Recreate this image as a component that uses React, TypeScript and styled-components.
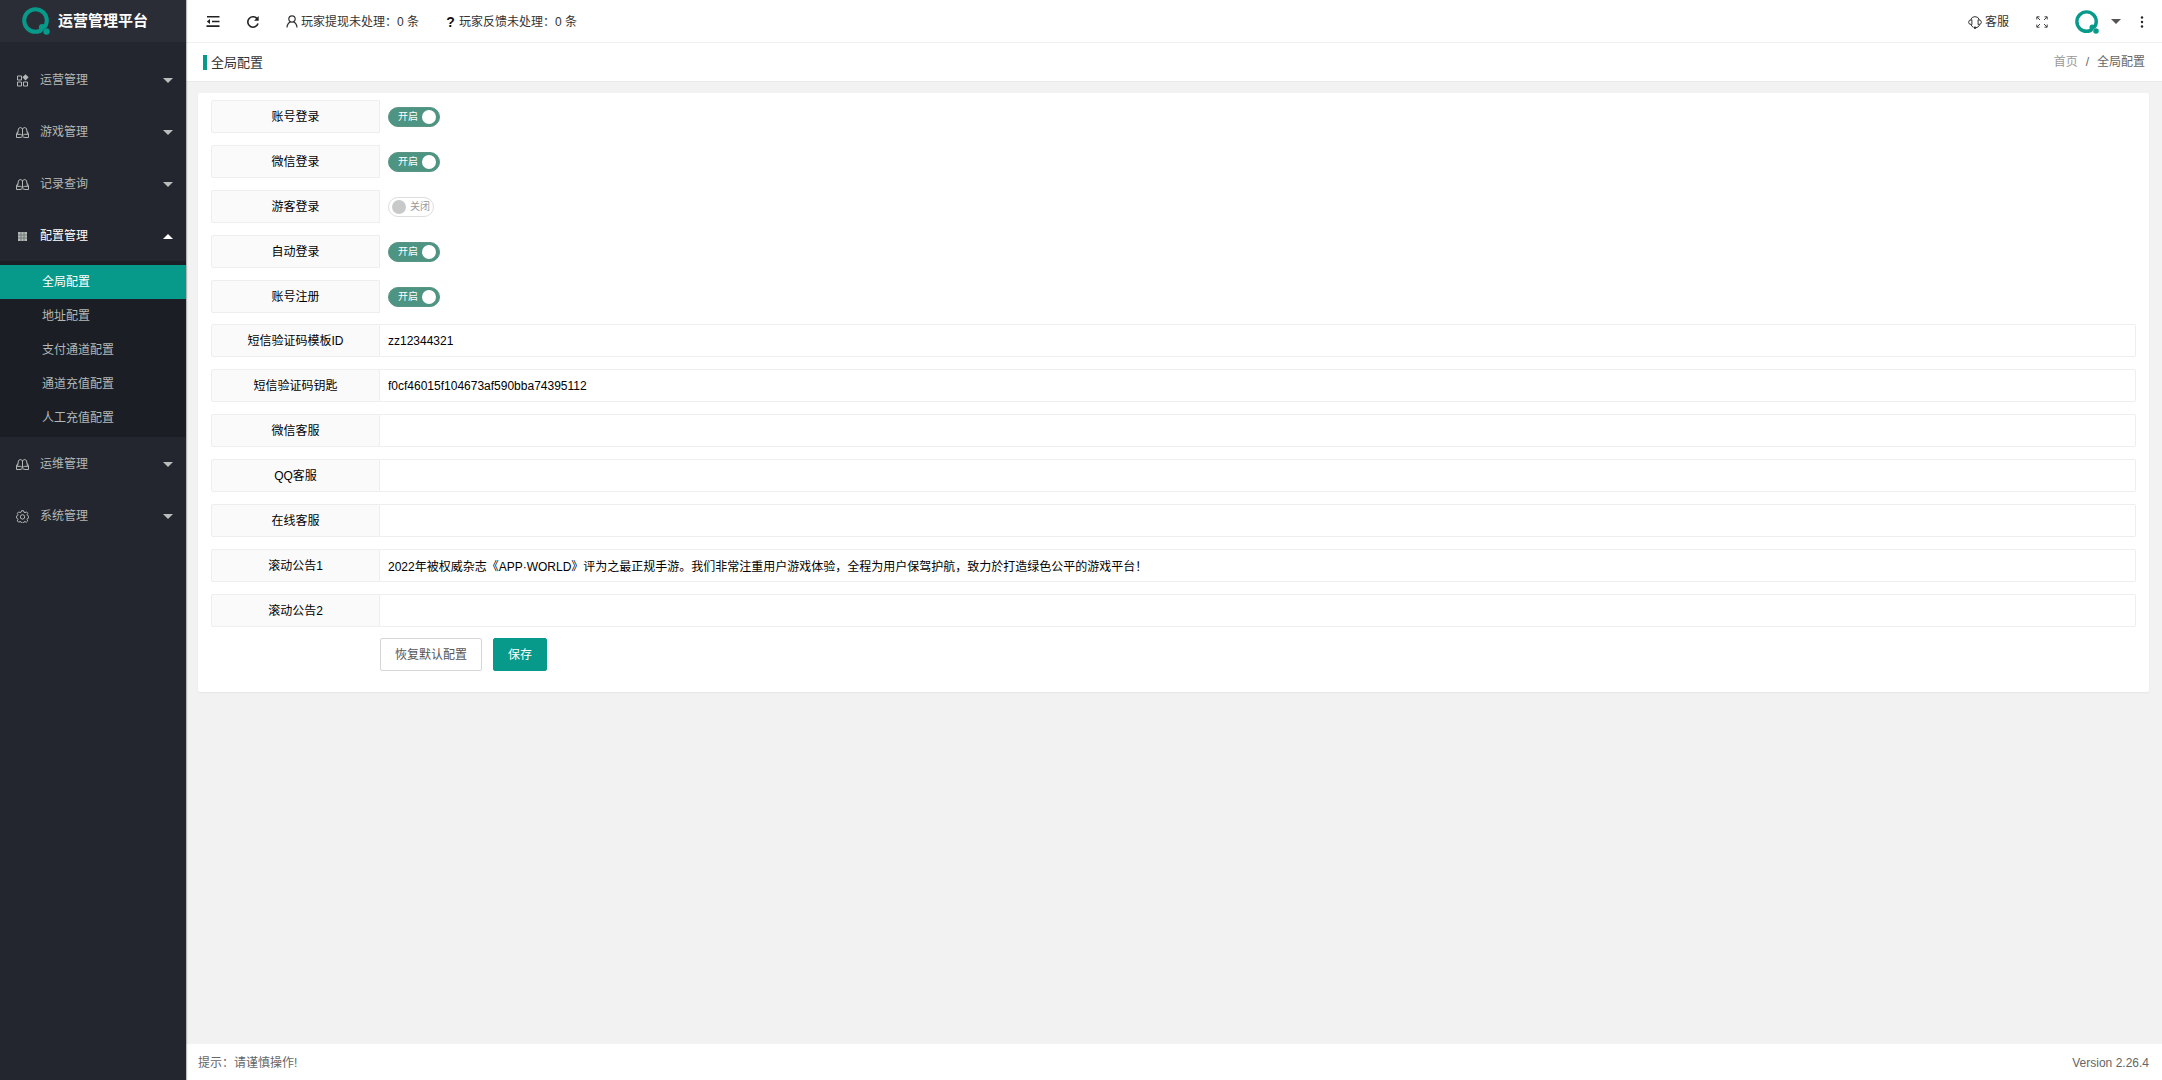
import React, { useState } from "react";
import styled, { createGlobalStyle, css } from "styled-components";

const teal = "#079989";

const GlobalStyle = createGlobalStyle`
  *, *::before, *::after { box-sizing: border-box; }
  body {
    margin: 0;
    color: #333;
    background: #f2f2f2;
    font: 12px/18px "Liberation Sans", "Noto Sans CJK SC", sans-serif;
  }
  a { color: inherit; text-decoration: none; }
  button, input { font: inherit; color: inherit; }
`;

const Layout = styled.div`
  display: grid;
  grid-template-columns: 186px minmax(0, 1fr);
  min-height: 100vh;
`;

/* ---------- sidebar ---------- */

const Sidebar = styled.aside`
  background: #23262e;
  color: #b3b8b6;
  z-index: 1;
  box-shadow: 1px 0 1px rgba(0, 0, 0, 0.25);
`;

const Brand = styled.h1`
  display: flex;
  align-items: center;
  gap: 8px;
  height: 42px;
  margin: 0 0 11px;
  padding-left: 22px;
  background: #2a2d35;
  color: #fff;
  font-size: 15px;
  font-weight: 700;
`;

const MenuButton = styled.button<{ $open?: boolean }>`
  display: flex;
  align-items: center;
  gap: 11px;
  width: 100%;
  height: 52px;
  padding: 2px 13px 0 16px;
  border: 0;
  background: none;
  color: ${(p) => (p.$open ? "#fff" : "inherit")};
  text-align: left;
  cursor: pointer;
`;

const MenuLabel = styled.span`
  flex: 1;
`;

const Caret = styled.i<{ $up?: boolean; $color?: string }>`
  border: 5px solid transparent;
  ${(p) =>
    p.$up
      ? css`border-top-width: 0; border-bottom-color: ${p.$color ?? "#fff"};`
      : css`border-bottom-width: 0; border-top-color: ${p.$color ?? "#b9bebc"};`}
`;

const SubMenu = styled.nav`
  padding: 4px 0 2px;
  background: #1b1e25;
`;

const SubLink = styled.a<{ $active?: boolean }>`
  display: block;
  padding-left: 42px;
  line-height: 34px;
  color: ${(p) => (p.$active ? "#fff" : "inherit")};
  background: ${(p) => (p.$active ? teal : "none")};
`;

/* ---------- page frame ---------- */

const Main = styled.div`
  display: flex;
  flex-direction: column;
`;

const Header = styled.header`
  display: flex;
  align-items: center;
  justify-content: space-between;
  height: 43px;
  padding: 1px 18px 0 20px;
  border-bottom: 1px solid #f0f0f0;
  background: #fff;
`;

const Tools = styled.div<{ $gap: number }>`
  display: flex;
  align-items: center;
  gap: ${(p) => p.$gap}px;
`;

const IconButton = styled.button`
  display: flex;
  align-items: center;
  padding: 0;
  border: 0;
  background: none;
  cursor: pointer;
`;

const ToolLink = styled.a`
  display: flex;
  align-items: center;
  gap: 3px;
`;

const TitleBar = styled.div`
  display: flex;
  align-items: center;
  justify-content: space-between;
  height: 38px;
  padding: 0 17px;
  background: #fff;
`;

const PageTitle = styled.h2`
  margin: 0;
  padding-left: 4px;
  border-left: 4px solid ${teal};
  font-size: 13px;
  font-weight: 400;
  line-height: 15px;
`;

const Crumbs = styled.nav`
  display: flex;
  gap: 8px;
  color: #666;
`;

const CrumbLink = styled.a`
  color: #999;
`;

const Content = styled.main`
  flex: 1;
  padding: 11px 13px 12px 12px;
  border-top: 1px solid #eaeaea;
`;

const Footer = styled.footer`
  display: flex;
  justify-content: space-between;
  padding: 10px 13px 8px 12px;
  background: #fff;
  color: #666;
`;

/* ---------- form ---------- */

const Card = styled.form`
  display: flex;
  flex-direction: column;
  gap: 11px;
  padding: 7px 13px 21px;
  border-radius: 2px;
  background: #fff;
  box-shadow: 0 1px 2px rgba(0, 0, 0, 0.06);
`;

const Group = styled.div`
  display: flex;
  flex-direction: column;
  gap: 12px;
`;

const Row = styled.div`
  display: grid;
  grid-template-columns: 169px minmax(0, 1fr);
  align-items: center;
  height: 33px;
  color: #000;
`;

const FieldLabel = styled.label`
  height: 33px;
  border: 1px solid #eee;
  border-radius: 2px 0 0 2px;
  background: #fafafa;
  line-height: 32px;
  text-align: center;
`;

const TextInput = styled.input`
  width: 100%;
  height: 33px;
  padding: 0 8px;
  border: 1px solid #eee;
  border-left: 0;
  border-radius: 0 2px 2px 0;
  outline: 0;
  background: #fff;
`;

const Toggle = styled.label`
  display: flex;
  justify-self: start;
  align-items: center;
  gap: 4px;
  height: 20px;
  margin-left: 8px;
  padding: 0 3px;
  border: 1px solid #ddd;
  border-radius: 10px;
  color: #999;
  font-size: 10px;
  line-height: 18px;
  cursor: pointer;

  &:has(:checked) {
    flex-direction: row-reverse;
    padding-left: 9px;
    border-color: #5b9583;
    background: #4d9482;
    color: #fff;
  }
`;

const ToggleKnob = styled.input`
  appearance: none;
  width: 14px;
  height: 14px;
  margin: 0;
  border-radius: 50%;
  background: #c8cac9;

  &:checked { background: #fff; }
`;

const Actions = styled.div`
  display: flex;
  gap: 11px;
  margin-left: 169px;
`;

const ActionButton = styled.button<{ $primary?: boolean }>`
  height: 33px;
  padding: 0 14px;
  border: 1px solid ${(p) => (p.$primary ? teal : "#d6d6d6")};
  border-radius: 2px;
  background: ${(p) => (p.$primary ? teal : "#fff")};
  color: ${(p) => (p.$primary ? "#fff" : "#555")};
  cursor: pointer;
`;

/* ---------- icons ---------- */

const QLogo = ({ size }: { size: number }) => (
  <svg width={size} height={size} viewBox="0 0 28 28" fill="none">
    <circle cx="13.500" cy="13.500" r="11.300" stroke={teal} strokeWidth="4" />
    <circle cx="20.300" cy="20.300" r="3.400" fill={teal} />
    <path d="M20 28Q19.500 20.500 28 20v8z" fill="currentColor" />
    <circle cx="24.500" cy="24.500" r="3.200" fill={teal} />
  </svg>
);

const LogoSlot = styled.span<{ $hole: string }>`
  display: flex;
  color: ${(p) => p.$hole};
`;

const stroke = { fill: "none", stroke: "currentColor", strokeWidth: 1 } as const;

const AppsIcon = () => (
  <svg width="13" height="13" viewBox="0 0 13 13" {...stroke}>
    <path d="M1.500 2h4v4h-4zM1.500 8h4v4h-4zM7.500 8h4v4h-4z" />
    <path d="M9.500 .2 12.600 3.300 9.500 6.400 6.400 3.300z" fill="currentColor" stroke="none" />
  </svg>
);

const BookIcon = () => (
  <svg width="13" height="13" viewBox="0 0 13 13" {...stroke}>
    <path d="M6.500 9.500V2.500Q4 .5 2.500 2.500L1.500 8.500Q4.500 7.500 6.500 9.500Q8.500 7.500 11.500 8.500L10.500 2.500Q9 .5 6.500 2.500" />
    <path d="M1.700 5.500.5 8v3.500h3.500q2.500-1.500 5 0h3.500V8l-1.200-2.500" />
  </svg>
);

const GridIcon = () => (
  <svg width="13" height="13" viewBox="0 0 13 13">
    <path d="M2 2h9v9H2z" fill="#b4bbb7" />
    <path d="M2 5h9M2 8h9M5 2v9M8 2v9" stroke="#727a76" fill="none" />
  </svg>
);

const GearIcon = () => (
  <svg width="13" height="13" viewBox="0 0 13 13" {...stroke}>
    <path d="M5.500 .7h2l.5 1.500 1 .4 1.500-.7 1.300 1.400-.7 1.400.4 1 1.200.4v1.900l-1.300.4-.4 1 .7 1.500-1.400 1.300-1.400-.7-1 .4-.4 1.200h-2l-.4-1.200-1-.4-1.500.7L1.300 10.900l.7-1.500-.4-1L.4 8V6.100l1.200-.4.4-1-.7-1.400 1.400-1.400 1.400.7 1-.4z" />
    <circle cx="6.500" cy="6.900" r="2.200" />
  </svg>
);

const FoldIcon = () => (
  <svg width="14" height="13" viewBox="0 0 14 13" fill="#222">
    <path d="M1 1h12.500v1.600H1zM6 5.700h7.500v1.500H6zM.5 10.300h13v1.600H.5zM4 3.900v5L.8 6.400z" />
  </svg>
);

const RefreshIcon = () => (
  <svg width="14" height="14" viewBox="0 0 14 14" fill="none" stroke="#222" strokeWidth="1.600">
    <path d="M11.300 4A5.200 5.200 0 1 0 12 8.500" />
    <path d="M12.700 1v4.800H8z" fill="#222" stroke="none" />
  </svg>
);

const UserIcon = () => (
  <svg width="12" height="13" viewBox="0 0 12 13" fill="none" stroke="#333" strokeWidth="1.200">
    <circle cx="6" cy="4" r="3.200" />
    <path d="M1 12.500Q1.200 8.500 4.500 6.900M11 12.500Q10.800 8.500 7.500 6.900" />
  </svg>
);

const HelpMark = styled.b`
  width: 11px;
  color: #111;
  font-size: 14px;
  text-align: center;
`;

const HeadsetIcon = () => (
  <svg width="14" height="14" viewBox="0 0 14 14" fill="none" stroke="#333">
    <path d="M2.700 4.800A4.500 4.500 0 0 1 11.300 4.800M11.700 9.800Q10.700 12.300 8 12.800" />
    <path d="M3.900 4.800v4.700Q.6 9.800.6 7.200T3.900 4.800zM10.100 4.800v4.700Q13.400 9.800 13.400 7.200T10.100 4.800zM3 9.800q1 2 2.500 2.500" />
    <circle cx="7" cy="12.700" r="1.200" fill="#333" stroke="none" />
  </svg>
);

const ExpandIcon = () => (
  <svg width="12" height="12" viewBox="0 0 12 12" fill="none" stroke="#444">
    <path d="M.8 3.500V.8h2.700M8.500.8h2.700v2.700M11.200 8.500v2.700H8.500M3.500 11.200H.8V8.500M1 1l3 3M11 1 8 4M11 11 8 8M1 11l3-3" />
  </svg>
);

const DotsIcon = () => (
  <svg width="4" height="12" viewBox="0 0 4 12" fill="#222">
    <circle cx="2" cy="1.500" r="1.200" />
    <circle cx="2" cy="6" r="1.200" />
    <circle cx="2" cy="10.500" r="1.200" />
  </svg>
);

/* ---------- data ---------- */

const subItems = ["全局配置", "地址配置", "支付通道配置", "通道充值配置", "人工充值配置"];

const menu = [
  { label: "运营管理", icon: <AppsIcon /> },
  { label: "游戏管理", icon: <BookIcon /> },
  { label: "记录查询", icon: <BookIcon /> },
  { label: "配置管理", icon: <GridIcon />, children: subItems },
  { label: "运维管理", icon: <BookIcon /> },
  { label: "系统管理", icon: <GearIcon /> },
];

const switches = [
  { id: "account-login", label: "账号登录", on: true },
  { id: "wechat-login", label: "微信登录", on: true },
  { id: "guest-login", label: "游客登录", on: false },
  { id: "auto-login", label: "自动登录", on: true },
  { id: "register", label: "账号注册", on: true },
];

const fields = [
  { id: "sms-template", label: "短信验证码模板ID", value: "zz12344321" },
  { id: "sms-key", label: "短信验证码钥匙", value: "f0cf46015f104673af590bba74395112" },
  { id: "wechat-service", label: "微信客服", value: "" },
  { id: "qq-service", label: "QQ客服", value: "" },
  { id: "online-service", label: "在线客服", value: "" },
  {
    id: "notice-1",
    label: "滚动公告1",
    value:
      "2022年被权威杂志《APP·WORLD》评为之最正规手游。我们非常注重用户游戏体验，全程为用户保驾护航，致力於打造绿色公平的游戏平台！",
  },
  { id: "notice-2", label: "滚动公告2", value: "" },
];

function SwitchRow({ id, label, on }: { id: string; label: string; on: boolean }) {
  const [checked, setChecked] = useState(on);
  return (
    <Row>
      <FieldLabel htmlFor={id}>{label}</FieldLabel>
      <Toggle>
        <ToggleKnob
          id={id}
          type="checkbox"
          checked={checked}
          onChange={(e) => setChecked(e.target.checked)}
        />
        {checked ? "开启" : "关闭"}
      </Toggle>
    </Row>
  );
}

export default function App() {
  const [open, setOpen] = useState("配置管理");
  return (
    <Layout>
      <GlobalStyle />
      <Sidebar>
        <Brand>
          <LogoSlot $hole="#2a2d35"><QLogo size={28} /></LogoSlot>
          运营管理平台
        </Brand>
        {menu.map((item) => {
          const isOpen = open === item.label;
          return (
            <div key={item.label}>
              <MenuButton $open={isOpen} onClick={() => setOpen(isOpen ? "" : item.label)}>
                {item.icon}
                <MenuLabel>{item.label}</MenuLabel>
                <Caret $up={isOpen} />
              </MenuButton>
              {isOpen && item.children && (
                <SubMenu>
                  {item.children.map((name, i) => (
                    <SubLink key={name} href="#" $active={i === 0}>{name}</SubLink>
                  ))}
                </SubMenu>
              )}
            </div>
          );
        })}
      </Sidebar>

      <Main>
        <Header>
          <Tools $gap={26}>
            <IconButton aria-label="收起菜单"><FoldIcon /></IconButton>
            <IconButton aria-label="刷新"><RefreshIcon /></IconButton>
            <ToolLink href="#"><UserIcon />玩家提现未处理：0 条</ToolLink>
            <ToolLink href="#"><HelpMark>?</HelpMark>玩家反馈未处理：0 条</ToolLink>
          </Tools>
          <Tools $gap={27}>
            <ToolLink href="#"><HeadsetIcon />客服</ToolLink>
            <IconButton aria-label="全屏"><ExpandIcon /></IconButton>
            <Tools $gap={19}>
              <Tools $gap={12}>
                <IconButton aria-label="账户">
                  <LogoSlot $hole="#fff"><QLogo size={24} /></LogoSlot>
                </IconButton>
                <Caret $color="#555" />
              </Tools>
              <IconButton aria-label="更多"><DotsIcon /></IconButton>
            </Tools>
          </Tools>
        </Header>

        <TitleBar>
          <PageTitle>全局配置</PageTitle>
          <Crumbs aria-label="位置">
            <CrumbLink href="#">首页</CrumbLink>
            <span>/</span>
            <span>全局配置</span>
          </Crumbs>
        </TitleBar>

        <Content>
          <Card onSubmit={(e) => e.preventDefault()}>
            <Group>
              {switches.map((s) => <SwitchRow key={s.id} {...s} />)}
            </Group>
            <Group>
              {fields.map((f) => (
                <Row key={f.id}>
                  <FieldLabel htmlFor={f.id}>{f.label}</FieldLabel>
                  <TextInput id={f.id} type="text" defaultValue={f.value} />
                </Row>
              ))}
            </Group>
            <Actions>
              <ActionButton type="reset">恢复默认配置</ActionButton>
              <ActionButton type="submit" $primary>保存</ActionButton>
            </Actions>
          </Card>
        </Content>

        <Footer>
          <span>提示：请谨慎操作!</span>
          <span>Version 2.26.4</span>
        </Footer>
      </Main>
    </Layout>
  );
}
